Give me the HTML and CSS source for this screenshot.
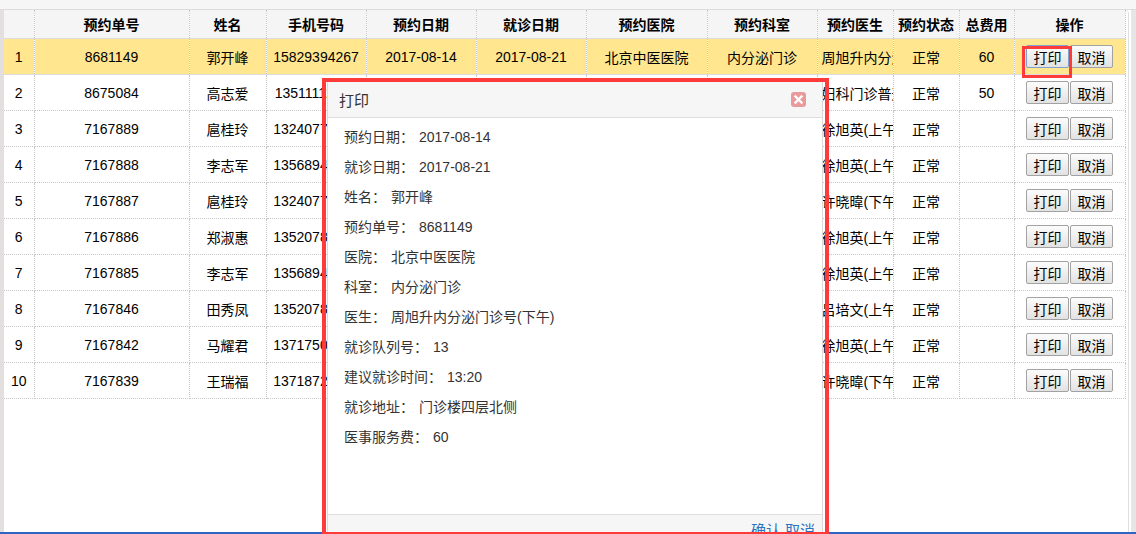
FILE: index.html
```html
<!DOCTYPE html>
<html lang="zh-CN">
<head>
  <meta charset="UTF-8" />
  <title>预约列表</title>
  <link rel="stylesheet" href="styles.css">
</head>
<body>
  <div class="topbar"></div>

  <div class="content">
    <div class="leftbar"></div>
    <div class="grid-wrap">
      <table class="grid">
        <colgroup>
          <col style="width:30px"><col style="width:155px"><col style="width:77px">
          <col style="width:100px"><col style="width:110px"><col style="width:110px">
          <col style="width:121px"><col style="width:110px"><col style="width:76px">
          <col style="width:66px"><col style="width:55px"><col style="width:111px">
        </colgroup>
        <thead>
          <tr>
            <th></th><th>预约单号</th><th>姓名</th><th>手机号码</th><th>预约日期</th><th>就诊日期</th>
            <th>预约医院</th><th>预约科室</th><th>预约医生</th><th>预约状态</th><th>总费用</th><th>操作</th>
          </tr>
        </thead>
        <tbody id="rows"></tbody>
      </table>
    </div>
    <div class="scrollbar"></div>
  </div>
  <div class="bottomline"></div>

  <div class="dialog">
    <div class="dialog-head">
      <span class="dialog-title">打印</span>
      <span class="dialog-close">
        <svg width="15" height="15" viewBox="0 0 15 15">
          <rect x="0" y="0" width="15" height="15" rx="3" fill="#e99a9a"/>
          <path d="M4.5 4.5 L10.5 10.5 M10.5 4.5 L4.5 10.5" stroke="#fff" stroke-width="2.4" stroke-linecap="square"/>
        </svg>
      </span>
    </div>
    <div class="dialog-body">
      <p>预约日期：<span>2017-08-14</span></p>
      <p>就诊日期：<span>2017-08-21</span></p>
      <p>姓名：<span>郭开峰</span></p>
      <p>预约单号：<span>8681149</span></p>
      <p>医院：<span>北京中医医院</span></p>
      <p>科室：<span>内分泌门诊</span></p>
      <p>医生：<span>周旭升内分泌门诊号(下午)</span></p>
      <p>就诊队列号：<span>13</span></p>
      <p>建议就诊时间：<span>13:20</span></p>
      <p>就诊地址：<span>门诊楼四层北侧</span></p>
      <p>医事服务费：<span>60</span></p>
    </div>
    <div class="dialog-foot">
      <a href="#">确认</a> <a href="#">取消</a>
    </div>
  </div>

  <div class="mark mark-dialog"></div>
  <div class="mark mark-button"></div>

  <script>
    const data = [
      ["8681149", "郭开峰", "15829394267", "北京中医医院", "内分泌门诊", "周旭升内分泌门诊号(下午)", "60"],
      ["8675084", "高志爱", "13511112836", "北京中医医院", "妇科门诊", "妇科门诊普通号", "50"],
      ["7167889", "扈桂玲", "13240771925", "北京中医医院", "皮肤科门诊", "徐旭英(上午)", ""],
      ["7167888", "李志军", "13568941203", "北京中医医院", "皮肤科门诊", "徐旭英(上午)", ""],
      ["7167887", "扈桂玲", "13240771925", "北京中医医院", "皮肤科门诊", "许晓暐(下午)", ""],
      ["7167886", "郑淑惠", "13520782216", "北京中医医院", "皮肤科门诊", "徐旭英(上午)", ""],
      ["7167885", "李志军", "13568941203", "北京中医医院", "皮肤科门诊", "徐旭英(上午)", ""],
      ["7167846", "田秀凤", "13520784451", "北京中医医院", "针灸科门诊", "吕培文(上午)", ""],
      ["7167842", "马耀君", "13717505628", "北京中医医院", "皮肤科门诊", "徐旭英(上午)", ""],
      ["7167839", "王瑞福", "13718723390", "北京中医医院", "皮肤科门诊", "许晓暐(下午)", ""]
    ];

    const tbody = document.getElementById("rows");
    data.forEach((r, i) => {
      const tr = document.createElement("tr");
      if (i === 0) tr.className = "selected";
      tr.innerHTML =
        `<td>${i + 1}</td><td>${r[0]}</td><td>${r[1]}</td><td>${r[2]}</td>` +
        `<td>2017-08-14</td><td>2017-08-21</td><td>${r[3]}</td><td>${r[4]}</td>` +
        `<td class="left">${r[5]}</td><td>正常</td><td>${r[6]}</td>` +
        `<td><button class="btn${i === 0 ? ' focus' : ''}">打印</button><button class="btn">取消</button></td>`;
      tbody.appendChild(tr);
    });
  </script>
</body>
</html>
```

FILE: styles.css
```css
body {
  margin: 0;
  width: 1136px;
  height: 534px;
  overflow: hidden;
  background: #fff;
  font-family: "Liberation Sans", "Noto Sans CJK SC", sans-serif;
  font-size: 14px;
  color: #000;
  display: flex;
  flex-direction: column;
}

.topbar {
  height: 9px;
  background: #f6f6f6;
  border-bottom: 1px solid #dcdcdc;
  flex: none;
}

.content {
  flex: 1;
  display: flex;
}

.leftbar {
  width: 4px;
  background: #e3dfdf;
}

.grid-wrap {
  flex: 1;
  border-right: 1px solid #dedede;
  border-top-right-radius: 4px;
}

.scrollbar {
  width: 5px;
  margin-left: 2px;
  background: #e6e6e6;
}

.bottomline {
  height: 2px;
  background: #3063c4;
  flex: none;
}

.grid {
  border-collapse: collapse;
  table-layout: fixed;
  width: 1121px;
}

.grid th,
.grid td {
  border: 1px dotted #c8c8c8;
  text-align: center;
  white-space: nowrap;
  overflow: hidden;
  padding: 0 3px;
}

.grid tr > :first-child { border-left: none; }
.grid thead tr th { border-top: none; }

.grid th {
  height: 28px;
  background: #f5f5f5;
  font-weight: bold;
  border-bottom: 1px solid #dcdcdc;
}

.grid td {
  height: 35px;
}

.grid td.left {
  text-align: left;
  padding-left: 4px;
}

.grid tr.selected td {
  background: #ffe68f;
  border-bottom: 1px solid #dcdcdc;
}

.btn {
  width: 43px;
  height: 23px;
  margin: 0;
  padding: 0;
  border: 1px solid #a2a2a2;
  border-radius: 2px;
  background: linear-gradient(#fcfcfc, #e2e2e2);
  font-family: "Noto Sans CJK SC", sans-serif;
  font-size: 14px;
  color: #000;
  vertical-align: middle;
}

.btn + .btn { margin-left: 1px; }

.btn.focus {
  border-color: #7da2ce;
}

/* print dialog */
.dialog {
  position: absolute;
  left: 327px;
  top: 81px;
  width: 494px;
  height: 470px;
  border: 1px solid #dadada;
  background: #fff;
  display: flex;
  flex-direction: column;
  color: #333;
}

.dialog-head {
  height: 35px;
  background: #f6f6f6;
  border-bottom: 1px solid #dedede;
  display: flex;
  align-items: center;
  justify-content: space-between;
  padding: 0 16px 0 11px;
  flex: none;
}

.dialog-title {
  font-size: 15px;
  font-family: "Noto Sans CJK SC", sans-serif;
}

.dialog-close {
  display: flex;
}

.dialog-body {
  height: 392px;
  padding: 4px 16px 0;
  flex: none;
}

.dialog-body p {
  margin: 0;
  height: 30px;
  line-height: 30px;
  font-size: 14px;
}

.dialog-body p span {
  margin-left: 5px;
}

.dialog-foot {
  flex: 1;
  border-top: 1px solid #dedede;
  background: #f6f6f6;
  text-align: right;
  padding: 4px 7px 0 0;
}

.dialog-foot a {
  color: #2e73c0;
  text-decoration: none;
  font-size: 15px;
}

/* red annotation frames */
.mark {
  position: absolute;
  border: 4px solid #ff3a3a;
  pointer-events: none;
}

.mark-dialog {
  left: 322px;
  top: 78px;
  width: 499px;
  height: 450px;
}

.mark-button {
  left: 1022px;
  top: 46px;
  width: 44px;
  height: 26px;
  border-width: 3px;
}
```
